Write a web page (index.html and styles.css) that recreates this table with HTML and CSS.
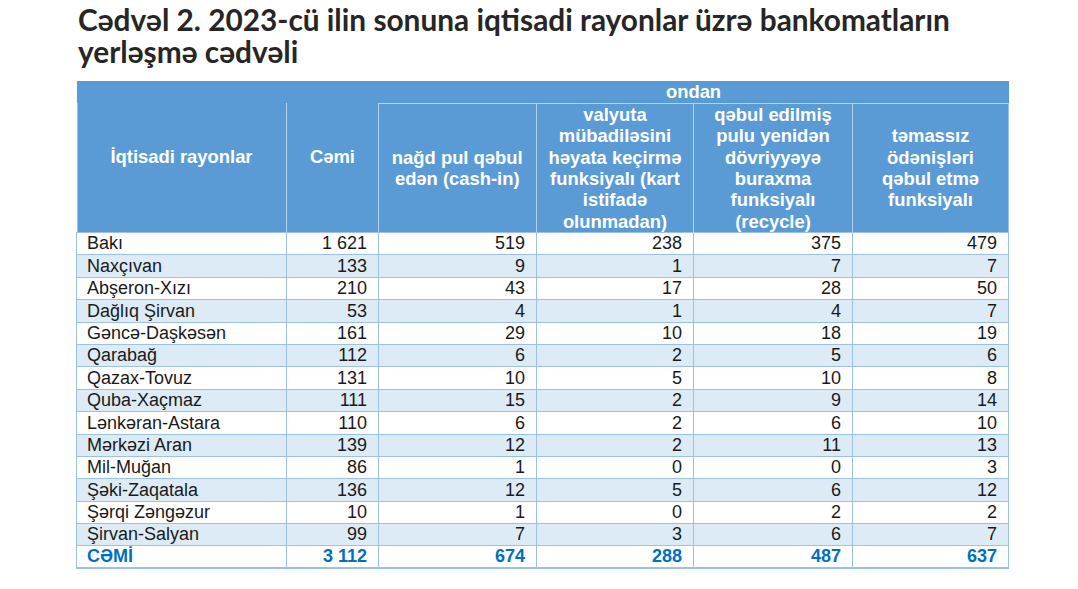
FILE: index.html
```html
<!DOCTYPE html>
<html lang="az">
<head>
<meta charset="utf-8">
<title>Cədvəl 2</title>
<link rel="stylesheet" href="styles.css">
</head>
<body>
<main class="page">
  <h1 class="title">Cədvəl 2. 2023-cü ilin sonuna iqtisadi rayonlar üzrə bankomatların<br>yerləşmə cədvəli</h1>
  <table class="atm">
    <colgroup>
      <col class="c-region"><col class="c-total"><col class="c-a"><col class="c-b"><col class="c-c"><col class="c-d">
    </colgroup>
    <thead>
      <tr class="h1">
        <th rowspan="2" class="hr first">İqtisadi rayonlar</th>
        <th rowspan="2" class="hr">Cəmi</th>
        <th colspan="4" class="ondan">ondan</th>
      </tr>
      <tr class="h2">
        <th class="sub">nağd pul qəbul<br>edən (cash-in)</th>
        <th class="sub">valyuta<br>mübadiləsini<br>həyata keçirmə<br>funksiyalı (kart<br>istifadə<br>olunmadan)</th>
        <th class="sub">qəbul edilmiş<br>pulu yenidən<br>dövriyyəyə<br>buraxma<br>funksiyalı<br>(recycle)</th>
        <th class="sub last">təmassız<br>ödənişləri<br>qəbul etmə<br>funksiyalı</th>
      </tr>
    </thead>
    <tbody>
      <tr><td>Bakı</td><td>1 621</td><td>519</td><td>238</td><td>375</td><td>479</td></tr>
      <tr><td>Naxçıvan</td><td>133</td><td>9</td><td>1</td><td>7</td><td>7</td></tr>
      <tr><td>Abşeron-Xızı</td><td>210</td><td>43</td><td>17</td><td>28</td><td>50</td></tr>
      <tr><td>Dağlıq Şirvan</td><td>53</td><td>4</td><td>1</td><td>4</td><td>7</td></tr>
      <tr><td>Gəncə-Daşkəsən</td><td>161</td><td>29</td><td>10</td><td>18</td><td>19</td></tr>
      <tr><td>Qarabağ</td><td>112</td><td>6</td><td>2</td><td>5</td><td>6</td></tr>
      <tr><td>Qazax-Tovuz</td><td>131</td><td>10</td><td>5</td><td>10</td><td>8</td></tr>
      <tr><td>Quba-Xaçmaz</td><td>111</td><td>15</td><td>2</td><td>9</td><td>14</td></tr>
      <tr><td>Lənkəran-Astara</td><td>110</td><td>6</td><td>2</td><td>6</td><td>10</td></tr>
      <tr><td>Mərkəzi Aran</td><td>139</td><td>12</td><td>2</td><td>11</td><td>13</td></tr>
      <tr><td>Mil-Muğan</td><td>86</td><td>1</td><td>0</td><td>0</td><td>3</td></tr>
      <tr><td>Şəki-Zaqatala</td><td>136</td><td>12</td><td>5</td><td>6</td><td>12</td></tr>
      <tr><td>Şərqi Zəngəzur</td><td>10</td><td>1</td><td>0</td><td>2</td><td>2</td></tr>
      <tr><td>Şirvan-Salyan</td><td>99</td><td>7</td><td>3</td><td>6</td><td>7</td></tr>
      <tr class="total"><td>CƏMİ</td><td>3 112</td><td>674</td><td>288</td><td>487</td><td>637</td></tr>
    </tbody>
  </table>
</main>
</body>
</html>
```

FILE: styles.css
```css
html, body {
  margin: 0;
  padding: 0;
  background: #ffffff;
}

.page {
  padding: 4px 0 0 76px;
}

.title {
  margin: 0 0 13px 2px;
  font-family: "Lato", "Open Sans", sans-serif;
  font-weight: 700;
  font-size: 29.8px;
  line-height: 32px;
  color: #262626;
}

.atm {
  border-collapse: collapse;
  table-layout: fixed;
  width: 932px;
  font-family: "Liberation Sans", Arial, sans-serif;
}

.c-region { width: 210px; }
.c-total { width: 92px; }
.c-a { width: 158px; }
.c-b { width: 157px; }
.c-c { width: 159px; }
.c-d { width: 156px; }

.atm th {
  background: #5b9bd5;
  color: #ffffff;
  font-weight: 700;
  font-size: 18.4px;
  line-height: 21.3px;
  text-align: center;
  vertical-align: middle;
  padding: 0 2px;
}

.atm .h1 { height: 22px; }
.atm .h2 { height: 129px; }

.atm .ondan {
  height: 22px;
  padding-top: 0;
  border-bottom: 1px solid #b4d2ee;
}

.atm .hr {
  background:
    linear-gradient(#b4d2ee, #b4d2ee) right 22px / 1px 100% no-repeat,
    #5b9bd5;
}

.atm .hr.first {
  background:
    linear-gradient(#9bc2e6, #9bc2e6) left 22px / 1px 100% no-repeat,
    linear-gradient(#b4d2ee, #b4d2ee) right 22px / 1px 100% no-repeat,
    #5b9bd5;
}

.atm .sub {
  border-right: 1px solid #b4d2ee;
  padding-top: 0;
  padding-bottom: 0;
}

.atm .sub.last {
  border-right: 1px solid #9bc2e6;
}

.atm td {
  height: 22.4px;
  padding: 0 11px 0 10px;
  font-size: 18px;
  line-height: 21px;
  color: #1a1a1a;
  text-align: right;
  vertical-align: bottom;
  border: 1px solid #9bc2e6;
  box-sizing: border-box;
  white-space: nowrap;
}

.atm td:first-child {
  text-align: left;
}

.atm tbody tr:nth-child(even) td {
  background: #ddebf7;
}

.atm .total td {
  color: #0070c0;
  font-weight: 700;
  border-bottom: 2px solid #9bc2e6;
}
```
